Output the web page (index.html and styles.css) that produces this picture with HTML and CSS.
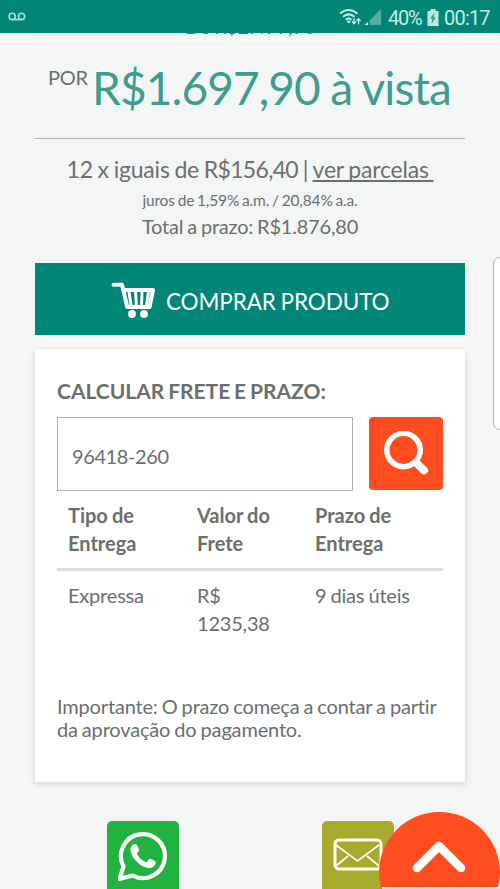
FILE: index.html
```html
<!DOCTYPE html>
<html lang="pt-BR">
<head>
<meta charset="utf-8">
<title>Produto</title>
<link rel="stylesheet" href="styles.css">
</head>
<body>
<div class="screen">
  <header class="status">
    <svg class="voicemail" width="18" height="9" viewBox="0 0 18 9"><circle cx="4.2" cy="4.4" r="3.1"/><circle cx="13.6" cy="4.4" r="3.1"/><path d="M4.2 7.6H13.6"/></svg>
    <div class="status-right">
      <svg class="wifi" width="43" height="18" viewBox="0 0 43 18">
        <g fill="none" stroke="#c5efe7" stroke-width="2"><path d="M1 5.6Q9.500 -1.600 18.500 5.600M4 8.800Q9.500 4 15.500 8.800M6.800 11.700Q9.500 9.400 12.500 11.700"/></g>
        <path d="M7.600 13.300L9.800 15.500 12 13.300Q9.800 11.700 7.600 13.300Z" fill="#c5efe7"/>
        <path d="M15 10V15.500M13 13.500L15 15.800 17 13.500M19.600 16.500V11M17.600 13L19.600 10.700 21.600 13" fill="none" stroke="#c5efe7" stroke-width="1.300"/>
        <path d="M29 13.500V17H25.500Z" fill="#d5f5ef"/><path d="M42 1V17H30.500V12.500Z" fill="#58aea1"/>
      </svg>
      <span class="percent">40%</span>
      <svg class="battery" width="12" height="17" viewBox="0 0 12 17"><path d="M3.500 0H8.500V2H11.500V17H.5V2H3.500Z" fill="#bfe8df"/><path d="M7.500 4L3 9.500H5.600L4.500 14.500 9 8.500H6.400Z" fill="#398f81"/></svg>
      <span class="clock">00:17</span>
    </div>
  </header>
  <main class="content">
    <div class="old-price"><span>De R$2.499,90</span></div>
    <div class="price"><span class="por">POR</span><span class="amount">R$1.697,90 à vista</span></div>
    <section class="terms">
      <p class="installments">12 x iguais de <span class="value">R$156,40</span> | <a>ver parcelas&nbsp;</a></p>
      <p class="interest">juros de 1,59% a.m. / 20,84% a.a.</p>
      <p class="total">Total a prazo: R$1.876,80</p>
    </section>
    <button class="buy">
      <svg width="45" height="37" viewBox="0 0 45 37"><g fill="none" stroke="#fff" stroke-linecap="round" stroke-linejoin="round"><path d="M2.500 2.800H11L16.300 25H38.500L42 8H12.500" stroke-width="4"/><path d="M18 10L20 23M24.600 10L25.300 23M31 10L30.500 23M37.500 10L35.500 23" stroke-width="3"/></g><circle cx="21" cy="32" r="3.900" fill="#fff"/><circle cx="33" cy="32" r="3.900" fill="#fff"/></svg>
      <span>COMPRAR PRODUTO</span>
    </button>
    <section class="card">
      <h2>CALCULAR FRETE E PRAZO:</h2>
      <div class="search">
        <div class="zip">96418-260</div>
        <button class="find"><svg width="46" height="46" viewBox="0 0 46 46"><g fill="none" stroke="#fff" stroke-linecap="round"><circle cx="20.500" cy="19" r="16.700" stroke-width="5.500"/><path d="M34 32.500L41 39.300" stroke-width="8"/></g></svg></button>
      </div>
      <div class="row head"><div>Tipo de<br>Entrega</div><div>Valor do<br>Frete</div><div>Prazo de<br>Entrega</div></div>
      <div class="row"><div>Expressa</div><div>R$<br>1235,38</div><div>9 dias úteis</div></div>
      <p class="note">Importante: O prazo começa a contar a partir<br>da aprovação do pagamento.</p>
    </section>
    <div class="contacts">
      <a class="tile whatsapp"><svg width="50" height="50" viewBox="0 0 50 50"><path d="M1.500 48L5.500 35.500A22 22 0 1 1 14.500 44.500Z" fill="none" stroke="#fff" stroke-width="4.200" stroke-linejoin="round"/><path d="M15 13.500C17.500 12.300 18.700 13 20 16L21 19C21.300 20.200 19.500 21.500 18.800 22.500C21.500 27.500 24.500 30 28.500 31.300L31.500 28C33 27.500 36 29.300 37.500 30.500C38.800 32 36 36.500 32.500 37C26 38 14.500 30 12.700 20C12.300 17.500 13 14.700 15 13.500Z" fill="#fff"/></svg></a>
      <a class="tile mail"><svg width="50" height="34" viewBox="0 0 50 34"><rect x="2" y="2" width="46" height="29" rx="4" fill="none" stroke="#ffffef" stroke-width="3"/><path d="M3 7L24.500 23 46 7M3 28L15 18M46 28L34 18" fill="none" stroke="#ffffef" stroke-width="1.800"/></svg></a>
    </div>
  </main>
  <div class="side-tab"></div>
  <a class="to-top"><svg width="54" height="34" viewBox="0 0 54 34"><path d="M5 28L27 6 49 28" fill="none" stroke="#fff" stroke-width="8.500" stroke-linecap="round" stroke-linejoin="round"/></svg></a>
  <div class="bottom-edge"></div>
</div>
</body>
</html>
```

FILE: styles.css
```css
* { box-sizing: border-box; }
body { margin: 0; }
p, h2 { margin: 0; }
svg { display: block; flex: none; }
button { border: 0; padding: 0; font: inherit; }
.screen { position: relative; width: 500px; height: 889px; overflow: hidden; background: #f4f6f6; color: #6b6f6e; font-family: Lato, sans-serif; white-space: nowrap; }
.status { height: 33px; background: #008577; display: flex; justify-content: space-between; padding: 0 10px 0 8px; }
.voicemail { margin-top: 12px; fill: none; stroke: #9fe5d8; stroke-width: 1.6; }
.status-right { display: flex; align-items: flex-start; color: #c5efe7; font: 20px/36px Roboto, sans-serif; }
.wifi { margin: 8px 6px 0 0; }
.percent { width: 33px; margin-right: 6px; letter-spacing: -1.3px; }
.battery { margin: 9px 5px 0 0; }
.clock { width: 46px; letter-spacing: -0.8px; }
.content { padding: 0 35px; }
.old-price { height: 4px; overflow: hidden; display: flex; justify-content: center; align-items: flex-end; font-size: 20px; line-height: 24px; letter-spacing: -0.2px; word-spacing: -1px; }
.old-price span { margin-bottom: -1px; }
.price { height: 102px; border-bottom: 1px solid #adb1b0; display: flex; padding-left: 13px; }
.por { width: 42px; font-size: 20px; line-height: 24px; padding-top: 28px; letter-spacing: -0.3px; }
.amount { margin-left: 2px; font-size: 46px; line-height: 56px; padding-top: 23px; color: #3d9e8f; letter-spacing: -0.9px; word-spacing: -0.5px; }
.terms { height: 124px; text-align: center; padding-top: 16px; }
.installments { font-size: 23px; line-height: 28px; letter-spacing: -0.2px; word-spacing: -0.9px; }
.installments .value { letter-spacing: -0.7px; }
.installments a { text-decoration: underline; text-underline-offset: 2px; text-decoration-thickness: 1.5px; text-decoration-skip-ink: none; }
.interest { font-size: 15.500px; line-height: 20px; padding-top: 7px; height: 31px; letter-spacing: -0.15px; word-spacing: -1px; }
.total { font-size: 20px; line-height: 24px; letter-spacing: -0.2px; word-spacing: -1px; }
.buy { width: 100%; height: 72px; background: #008577; color: #fff; display: flex; align-items: center; padding-left: 76px; gap: 10px; font-size: 22.500px; letter-spacing: -0.1px; word-spacing: -1px; }
.buy span { margin-top: 5px; }
.buy svg { margin-top: 3px; }
.card { height: 433px; margin-top: 14px; background: #fff; box-shadow: 0 2px 6px rgba(0,0,0,.14); padding: 30px 22px 0; }
h2 { font-size: 21px; line-height: 24px; font-weight: 700; height: 38px; word-spacing: -1.3px; }
.search { display: flex; justify-content: space-between; margin-bottom: 10px; }
.zip { width: 296px; height: 74px; border: 1px solid #aeb0b0; padding: 25px 14px; font-size: 20px; line-height: 26px; letter-spacing: -0.4px; }
.find { width: 74px; height: 73px; border-radius: 4px; background: #ff4d20; display: grid; place-items: center; }
.row { display: grid; grid-template-columns: 129px 118px 1fr; padding-left: 11px; font-size: 20px; line-height: 28px; letter-spacing: -0.2px; word-spacing: -0.8px; }
.head { height: 70px; font-weight: 700; border-bottom: 3px solid #dcdddd; margin-bottom: 10px; letter-spacing: 0; }
.note { margin-top: 58px; font-size: 20px; line-height: 23px; letter-spacing: -0.17px; word-spacing: -0.9px; }
.contacts { display: flex; gap: 143px; padding: 39px 0 0 72px; }
.tile { width: 72px; height: 80px; border-radius: 5px; }
.whatsapp { background: #22b240; padding: 10px 0 0 11px; }
.mail { background: #a8aa2e; padding: 17px 0 0 11px; }
.side-tab { position: absolute; left: 493px; top: 257px; width: 20px; height: 173px; border: 1px solid #b1b4b4; border-radius: 7px; background: #fff; }
.to-top { position: absolute; left: 379px; top: 812px; width: 121px; height: 121px; border-radius: 50%; background: #ff4d20; padding: 28px 0 0 33px; }
.bottom-edge { position: absolute; left: 382px; bottom: 0; width: 118px; height: 2px; background: #f8e5df; }
```
